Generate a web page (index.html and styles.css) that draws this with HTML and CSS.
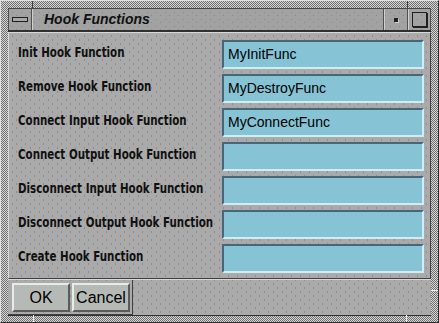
FILE: index.html
```html
<!DOCTYPE html>
<html lang="en">
    <head>
        <meta charset="UTF-8">
        <title>Hook Functions</title>
        <link rel="stylesheet" href="styles.css">
    </head>
    <body>
        <div class="window">
            <span class="notch notch-tl"></span>
            <span class="notch notch-tr"></span>
            <span class="notch notch-bl"></span>
            <span class="notch notch-br"></span>
            <span class="notch notch-rb"></span>

            <div class="titlebar">
                <div class="tb-btn menu-btn"><span class="bar"></span></div>
                <div class="title">Hook Functions</div>
                <div class="tb-btn min-btn"><span class="dot"></span></div>
                <div class="tb-btn max-btn"><span class="box"></span></div>
            </div>

            <div class="client">
                <div class="fields">
                    <label class="label"><span>Init Hook Function</span></label>
                    <div class="field">MyInitFunc</div>
                    <label class="label"><span>Remove Hook Function</span></label>
                    <div class="field">MyDestroyFunc</div>
                    <label class="label"><span>Connect Input Hook Function</span></label>
                    <div class="field">MyConnectFunc</div>
                    <label class="label"><span>Connect Output Hook Function</span></label>
                    <div class="field"></div>
                    <label class="label"><span>Disconnect Input Hook Function</span></label>
                    <div class="field"></div>
                    <label class="label"><span>Disconnect Output Hook Function</span></label>
                    <div class="field"></div>
                    <label class="label"><span>Create Hook Function</span></label>
                    <div class="field"></div>
                </div>
                <div class="buttons">
                    <div class="btn-group">
                        <button class="btn">OK</button>
                        <button class="btn">Cancel</button>
                    </div>
                </div>
            </div>
        </div>
    </body>
</html>
```

FILE: styles.css
```css
body {
    margin: 0;
    background: #a8a8a8;
}
.window {
    position: relative;
    width: 439px;
    height: 323px;
    box-sizing: border-box;
    padding: 7px;
    display: flex;
    flex-direction: column;
    background: repeating-conic-gradient(#d4d4d4 0 25%, #727272 0 50%) 0 0 / 2px 2px;
    border-top: 1px solid #e0e0e0;
    border-left: 1px solid #e0e0e0;
    border-right: 1px solid #303030;
    border-bottom: 1px solid #303030;
}
/* little corner marks on the frame */
.notch {
    position: absolute;
    background: #404040;
}
.notch-tl { left: 31px; top: 0; width: 1px; height: 7px; }
.notch-tr { right: 30px; top: 0; width: 1px; height: 7px; }
.notch-bl { left: 32px; bottom: 0; width: 1px; height: 7px; background: #f0f0f0; }
.notch-br { right: 31px; bottom: 0; width: 1px; height: 7px; background: #f0f0f0; }
.notch-rb { right: 0; bottom: 31px; width: 7px; height: 1px; background: #f0f0f0; }

.titlebar {
    height: 24px;
    display: flex;
    background-color: #a2a2a2;
    background-image:
        radial-gradient(circle, #888 0.6px, transparent 0.8px),
        radial-gradient(circle, #888 0.6px, transparent 0.8px);
    background-size: 9px 7px, 9px 7px;
    background-position: 0 0, 4px 3px;
    border-top: 1px solid #484848;
    border-bottom: 2px solid #303030;
    box-sizing: border-box;
}
.tb-btn {
    display: flex;
    align-items: center;
    justify-content: center;
    box-sizing: border-box;
    border-left: 1px solid #d0d0d0;
    border-right: 1px solid #505050;
}
.menu-btn {
    width: 24px;
    border-left: 1px solid #505050;
}
.menu-btn .bar {
    width: 14px;
    height: 3px;
    background: #a8a8a8;
    border: 1px solid #202020;
}
.title {
    flex: 1;
    padding-left: 11px;
    font-family: "Liberation Sans", sans-serif;
    font-style: italic;
    font-weight: bold;
    font-size: 14px;
    line-height: 21px;
    color: #101010;
    border-left: 1px solid #d0d0d0;
    border-right: 1px solid #505050;
}
.min-btn {
    width: 24px;
}
.min-btn .dot {
    width: 4px;
    height: 4px;
    background: #202020;
    box-shadow: 1px 1px 0 #d0d0d0;
}
.max-btn {
    width: 23px;
}
.max-btn .box {
    width: 13px;
    height: 13px;
    border: 1px solid #202020;
    box-shadow: 1px 1px 0 #202020;
}
.client {
    flex: 1;
    display: flex;
    flex-direction: column;
    background-color: #aaaaaa;
    background-image:
        radial-gradient(circle, #8e8e8e 0.6px, transparent 0.8px),
        radial-gradient(circle, #8e8e8e 0.6px, transparent 0.8px);
    background-size: 9px 8px, 9px 8px;
    background-position: 0 0, 4px 4px;
}
.fields {
    display: grid;
    grid-template-columns: 204px 202px;
    grid-auto-rows: 29px;
    row-gap: 5px;
    padding: 7px 6px 4px 9px;
    border-top: 1px solid #d8d8d8;
    border-left: 1px solid #d8d8d8;
    border-bottom: 1px solid #404040;
    border-right: 1px solid #404040;
    height: 247px;
    box-sizing: border-box;
}
.label {
    display: flex;
    align-items: center;
    white-space: nowrap;
    font-family: "DejaVu Sans", sans-serif;
    font-weight: bold;
    font-size: 14.5px;
    color: #101010;
    padding-bottom: 5px;
}
/* the original face is a narrow bold bitmap font */
.label span {
    display: inline-block;
    transform: scaleX(0.71);
    transform-origin: left center;
}
.field {
    box-sizing: border-box;
    background: #86c3d5;
    border-top: 2px solid #46677a;
    border-left: 2px solid #46677a;
    border-bottom: 2px solid #cdeef6;
    border-right: 2px solid #cdeef6;
    padding-left: 4px;
    font-family: "Liberation Sans", sans-serif;
    font-size: 14px;
    line-height: 25px;
    color: #000;
}
.buttons {
    flex: 1;
    display: flex;
    border-top: 1px solid #d8d8d8;
    border-bottom: 1px solid #303030;
}
.btn-group {
    display: flex;
    gap: 2px;
    padding: 3px 2px 2px 4px;
    border-right: 1px solid #404040;
    border-bottom: 1px solid #404040;
}
.btn {
    width: 58px;
    height: 29px;
    margin: 0;
    padding: 0;
    background: #b6bab6;
    border-top: 2px solid #e8ece8;
    border-left: 2px solid #e8ece8;
    border-bottom: 2px solid #585c58;
    border-right: 2px solid #585c58;
    font-family: "Liberation Sans", sans-serif;
    font-size: 16px;
    color: #000;
}
```
